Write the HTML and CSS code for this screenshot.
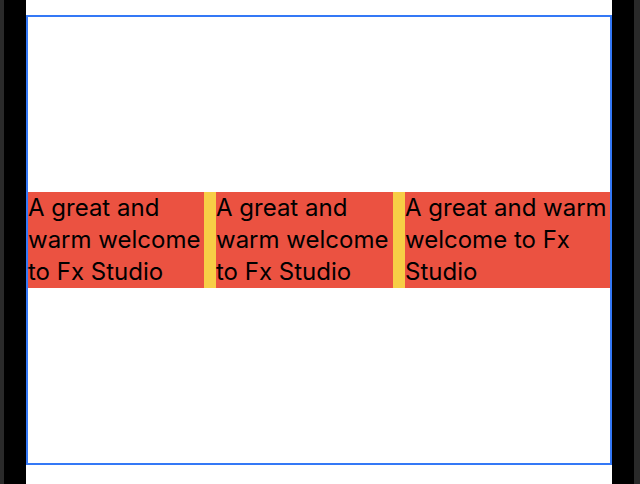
FILE: index.html
```html
<!DOCTYPE html>
<html>
<head>
<meta charset="utf-8">
<link rel="stylesheet" href="styles.css">
</head>
<body>
<div class="screen">
  <div class="edge-left"></div>
  <div class="side"></div>
  <div class="canvas">
    <div class="frame">
      <div class="row">
        <div class="cell c1">A great and warm welcome to Fx Studio</div>
        <div class="cell c2">A great and warm welcome to Fx Studio</div>
        <div class="cell c3">A great and warm welcome to Fx Studio</div>
      </div>
    </div>
  </div>
  <div class="side"></div>
  <div class="edge-right"></div>
</div>
</body>
</html>
```
FILE: styles.css
```css
html, body {
  margin: 0;
  padding: 0;
  background: #000;
}
.screen {
  display: flex;
  width: 640px;
  height: 484px;
}
.edge-left {
  width: 4px;
  background: #2a2a2a;
}
.edge-right {
  width: 6px;
  background: #2a2a2a;
}
.side {
  width: 22px;
  background: #000;
}
.canvas {
  width: 586px;
  background: #fff;
  padding-top: 15px;
  box-sizing: border-box;
}
.frame {
  height: 450px;
  border: 2px solid #3478f6;
  box-sizing: border-box;
  display: flex;
  align-items: center;
}
.row {
  display: grid;
  grid-template-columns: 176px 177px 1fr;
  column-gap: 12px;
  background: #f7ce46;
  width: 100%;
}
.cell {
  background: #eb5241;
  color: #000;
  font-family: Inter, "Liberation Sans", Arial, sans-serif;
  font-size: 24px;
  line-height: 32.33px;
}
```
